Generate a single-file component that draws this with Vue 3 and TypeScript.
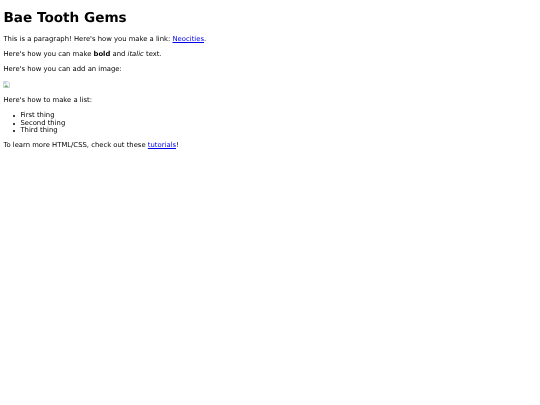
<script setup lang="ts">
const items: string[] = ['First thing', 'Second thing', 'Third thing']
</script>

<template>
  <main class="page">
    <h1 class="title">Bae Tooth Gems</h1>
    <p class="para">This is a paragraph! Here's how you make a link: <a href="#" class="link">Neocities</a>.</p>
    <p class="para">Here's how you can make <strong>bold</strong> and <em>italic</em> text.</p>
    <p class="para">Here's how you can add an image:</p>
    <p class="para image-row">
      <svg class="broken" width="7" height="7" viewBox="0 0 7 7">
        <path d="M0.5 6.5 V0.5 H5 L6.5 2 V6.5 Z" fill="#f4f6f8" stroke="#b4bcc4" stroke-width="0.6" />
        <path d="M1 6.2 L3 3.8 L6 6.2 Z" fill="#6fb06f" />
        <path d="M1.2 1.2 H3.4 V3 H1.2 Z" fill="#b9d2ee" />
      </svg>
    </p>
    <p class="para">Here's how to make a list:</p>
    <ul class="list">
      <li v-for="item in items" :key="item" class="item">{{ item }}</li>
    </ul>
    <p class="para">To learn more HTML/CSS, check out these <a href="#" class="link">tutorials</a>!</p>
  </main>
</template>

<style scoped>
.page {
  padding: 3.4px;
  font-family: "DejaVu Sans", sans-serif;
  font-size: 6.84px;
  line-height: 7.9px;
  color: #000;
  text-rendering: geometricPrecision;
  filter: blur(0.3px);
}
.title {
  font-size: 13.62px;
  line-height: 16px;
  font-weight: bold;
  margin: 6.4px 0 10.2px;
}
.para {
  margin: 7px 0;
}
.link {
  color: #0000ee;
  text-decoration: underline;
}
.para.image-row {
  margin-top: 5.2px;
  height: 9px;
}
.broken {
  display: block;
}
.list {
  margin: 6.8px 0;
  padding-left: 17px;
  list-style: none;
}
.item {
  position: relative;
}
.item::before {
  content: "";
  position: absolute;
  left: -7px;
  top: 3px;
  width: 2px;
  height: 2px;
  border-radius: 50%;
  background: #000;
}
</style>
